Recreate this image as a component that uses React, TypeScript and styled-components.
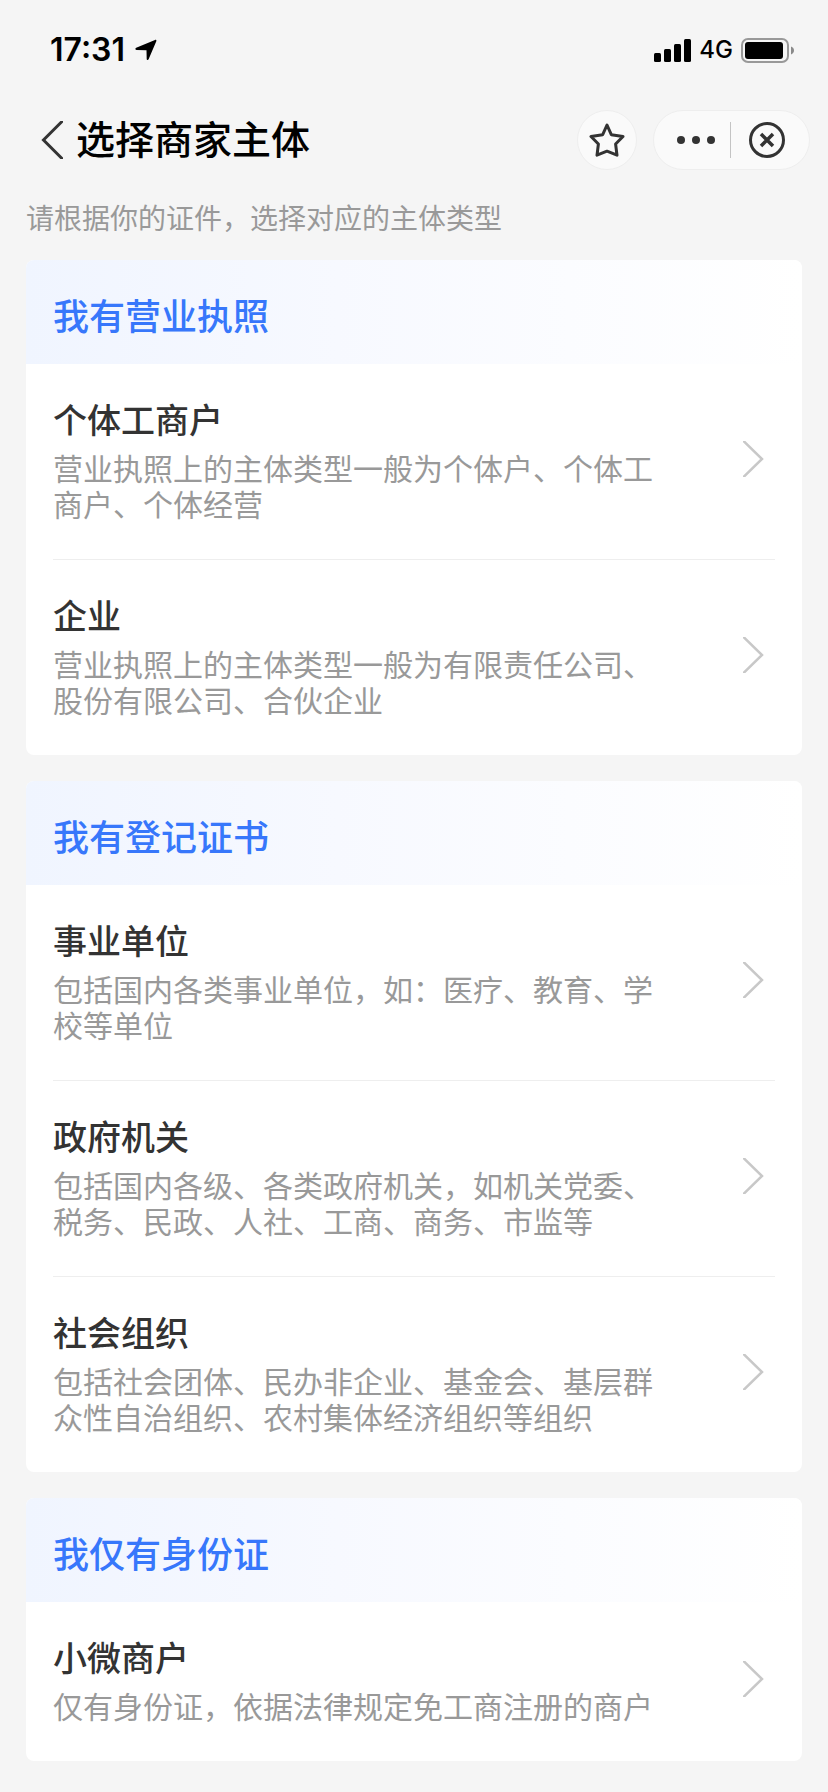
import React from 'react';
import styled, { createGlobalStyle } from 'styled-components';

const GlobalStyle = createGlobalStyle`
  *, *::before, *::after { box-sizing: border-box; }
  html { background: #f5f5f5; }
  body {
    margin: 0;
    font-family: "Noto Sans CJK SC", "Noto Sans", sans-serif;
    color: #333;
  }
  h1, h2, h3, p, ul { margin: 0; padding: 0; }
  ul { list-style: none; }
  button { border: 0; padding: 0; background: none; color: inherit; font: inherit; cursor: pointer; }
  a { color: inherit; text-decoration: none; }
  svg { display: block; flex: none; }
`;

const Page = styled.div`
  min-height: 100vh;
  padding-bottom: 24px;
  background: #f5f5f5;
`;

const StatusBar = styled.div`
  display: flex;
  align-items: center;
  justify-content: space-between;
  height: 100px;
  padding: 0 34px 0 50px;
  color: #000;
  font-family: Inter, "Liberation Sans", sans-serif;
`;

const StatusGroup = styled.div<{ $gap: number }>`
  display: flex;
  align-items: center;
  gap: ${({ $gap }) => $gap}px;
`;

const Clock = styled.time`
  font-size: 32px;
  font-weight: 600;
  line-height: 40px;
`;

const Network = styled.span`
  font-size: 24px;
  font-weight: 500;
  line-height: 32px;
`;

const NavBar = styled.header`
  display: flex;
  align-items: center;
  height: 80px;
  padding: 0 18px 0 40px;
`;

const BackButton = styled.button`
  display: flex;
  align-items: center;
  height: 60px;
  padding-right: 13px;
`;

const PageTitle = styled.h1`
  flex: 1;
  padding-bottom: 6px;
  color: #000;
  font-size: 39px;
  font-weight: 500;
  line-height: 54px;
`;

const RoundButton = styled.button`
  display: grid;
  place-items: center;
  width: 60px;
  height: 60px;
  margin-right: 16px;
  border: 1px solid #eee;
  border-radius: 50%;
  background: #fafafa;
`;

const Capsule = styled.div`
  display: flex;
  align-items: center;
  height: 60px;
  border: 1px solid #eee;
  border-radius: 30px;
  background: #fafafa;
`;

const CapsuleButton = styled.button<{ $side: 'left' | 'right' }>`
  display: flex;
  align-items: center;
  height: 58px;
  padding: ${({ $side }) => ($side === 'left' ? '0 15px 0 23px' : '0 24px 0 18px')};
`;

const CapsuleDivider = styled.span`
  width: 1px;
  height: 36px;
  background: #c4c4c4;
`;

const Hint = styled.p`
  padding: 17px 26px 0;
  color: #999;
  font-size: 28px;
  line-height: 40px;
`;

const Groups = styled.main`
  display: flex;
  flex-direction: column;
  gap: 26px;
  padding: 23px 26px 0;
`;

const Card = styled.section`
  overflow: hidden;
  border-radius: 8px;
  background: #fff;
`;

const CardTitle = styled.h2`
  padding: 32px 27px 28px;
  background: linear-gradient(90deg, #f0f5ff 0%, #f7f9ff 40%, #fff 100%);
  color: #3777fb;
  font-size: 36px;
  font-weight: 500;
  line-height: 44px;
`;

const Options = styled.ul`
  padding: 0 27px;
`;

const Option = styled.li`
  & + & { border-top: 1px solid #eee; }
`;

const OptionLink = styled.a`
  display: flex;
  align-items: center;
  gap: 80px;
  padding: 33px 11px 38px 0;
`;

const OptionText = styled.div`
  flex: 1;
`;

const OptionTitle = styled.h3`
  margin-bottom: 8px;
  color: #333;
  font-size: 34px;
  font-weight: 500;
  line-height: 44px;
`;

const OptionNote = styled.p`
  color: #999;
  font-size: 30px;
  line-height: 36px;
`;

interface Entity {
  title: string;
  note: string;
}

interface Group {
  title: string;
  entities: Entity[];
}

const groups: Group[] = [
  {
    title: '我有营业执照',
    entities: [
      { title: '个体工商户', note: '营业执照上的主体类型一般为个体户、个体工商户、个体经营' },
      { title: '企业', note: '营业执照上的主体类型一般为有限责任公司、股份有限公司、合伙企业' },
    ],
  },
  {
    title: '我有登记证书',
    entities: [
      { title: '事业单位', note: '包括国内各类事业单位，如：医疗、教育、学校等单位' },
      { title: '政府机关', note: '包括国内各级、各类政府机关，如机关党委、税务、民政、人社、工商、商务、市监等' },
      { title: '社会组织', note: '包括社会团体、民办非企业、基金会、基层群众性自治组织、农村集体经济组织等组织' },
    ],
  },
  {
    title: '我仅有身份证',
    entities: [{ title: '小微商户', note: '仅有身份证，依据法律规定免工商注册的商户' }],
  },
];

const LocationIcon = () => (
  <svg width="22" height="22" viewBox="0 0 22 22" aria-hidden="true">
    <path d="M1.200 8.700 20 .9c1-.4 1.700.3 1.300 1.300L13.600 20.300c-.5 1.200-1.900 1-1.900-.3L11.500 11.300 1.700 10.900C.1 10.800 0 9.200 1.200 8.700Z" />
  </svg>
);

const SignalIcon = () => (
  <svg width="37" height="23" viewBox="0 0 37 23" aria-hidden="true">
    <rect x="0" y="14" width="7" height="9" rx="1.500" />
    <rect x="10" y="10" width="7" height="13" rx="1.500" />
    <rect x="20" y="5" width="7" height="18" rx="1.500" />
    <rect x="30" y="0" width="7" height="23" rx="1.500" />
  </svg>
);

const BatteryIcon = () => (
  <svg width="53" height="25" viewBox="0 0 53 25" aria-hidden="true">
    <rect x="1" y="1" width="46" height="23" rx="6" fill="none" stroke="#999" strokeWidth="2" />
    <rect x="4" y="4" width="38" height="17" rx="3" />
    <path d="M50 8.500c2 .8 3 2.200 3 4s-1 3.200-3 4Z" fill="#8a8a8a" />
  </svg>
);

const BackIcon = () => (
  <svg width="23" height="38" viewBox="0 0 23 38" fill="none" stroke="#333" strokeWidth="3" aria-hidden="true">
    <path d="M25-2.500 3.500 19 25 40.500" />
  </svg>
);

const StarIcon = () => (
  <svg width="36" height="36" viewBox="0 0 36 36" fill="none" stroke="#333" strokeWidth="3" strokeLinejoin="round" aria-hidden="true">
    <path d="M18 3 22.300 12.700 34 14.500 26.600 22 28 33.200 18 29.200 8 33.200 9.400 22 2 14.500 13.700 12.700Z" />
  </svg>
);

const MoreIcon = () => (
  <svg width="38" height="8" viewBox="0 0 38 8" fill="#333" aria-hidden="true">
    <circle cx="4" cy="4" r="4" />
    <circle cx="19" cy="4" r="4" />
    <circle cx="34" cy="4" r="4" />
  </svg>
);

const CloseIcon = () => (
  <svg width="36" height="36" viewBox="0 0 36 36" fill="none" stroke="#333" strokeWidth="3" aria-hidden="true">
    <circle cx="18" cy="18" r="16.500" />
    <path d="m12 12 12 12M24 12 12 24" strokeWidth="3.500" />
  </svg>
);

const ChevronIcon = () => (
  <svg width="21" height="36" viewBox="0 0 21 36" fill="none" stroke="#c8c8c8" strokeWidth="2.500" aria-hidden="true">
    <path d="M-1-1.500 19 18-1 37.500" />
  </svg>
);

export default function App() {
  return (
    <Page>
      <GlobalStyle />
      <StatusBar>
        <StatusGroup $gap={10}>
          <Clock>17:31</Clock>
          <LocationIcon />
        </StatusGroup>
        <StatusGroup $gap={8}>
          <SignalIcon />
          <Network>4G</Network>
          <BatteryIcon />
        </StatusGroup>
      </StatusBar>
      <NavBar>
        <BackButton type="button" aria-label="返回">
          <BackIcon />
        </BackButton>
        <PageTitle>选择商家主体</PageTitle>
        <RoundButton type="button" aria-label="收藏">
          <StarIcon />
        </RoundButton>
        <Capsule>
          <CapsuleButton type="button" $side="left" aria-label="更多">
            <MoreIcon />
          </CapsuleButton>
          <CapsuleDivider />
          <CapsuleButton type="button" $side="right" aria-label="关闭">
            <CloseIcon />
          </CapsuleButton>
        </Capsule>
      </NavBar>
      <Hint>请根据你的证件，选择对应的主体类型</Hint>
      <Groups>
        {groups.map((group) => (
          <Card key={group.title}>
            <CardTitle>{group.title}</CardTitle>
            <Options>
              {group.entities.map((entity) => (
                <Option key={entity.title}>
                  <OptionLink href="#">
                    <OptionText>
                      <OptionTitle>{entity.title}</OptionTitle>
                      <OptionNote>{entity.note}</OptionNote>
                    </OptionText>
                    <ChevronIcon />
                  </OptionLink>
                </Option>
              ))}
            </Options>
          </Card>
        ))}
      </Groups>
    </Page>
  );
}
